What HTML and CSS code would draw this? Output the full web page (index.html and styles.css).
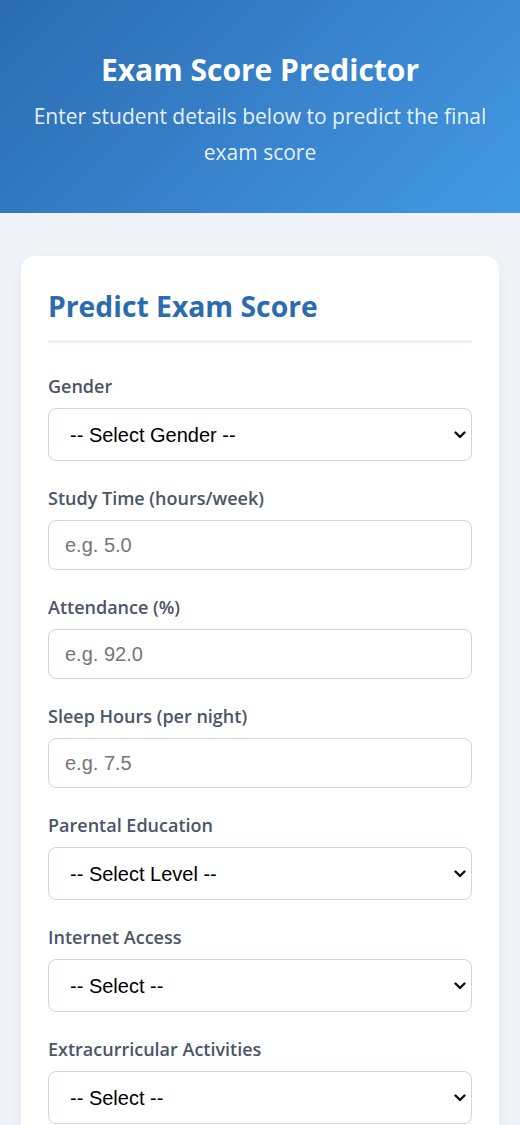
FILE: index.html
```html
<!DOCTYPE html>
<html lang="en">
<head>
<meta charset="utf-8">
<title>Exam Score Predictor</title>
<link rel="stylesheet" href="styles.css">
</head>
<body>
<header class="hero">
  <h1 class="hero-title">Exam Score Predictor</h1>
  <p class="hero-sub">Enter student details below to predict the final exam score</p>
</header>
<main class="main">
  <section class="card">
    <h2 class="card-title">Predict Exam Score</h2>
    <form class="form">
      <div class="group">
        <label class="label">Gender</label>
        <div class="select-wrap">
          <select class="control select"><option>-- Select Gender --</option></select>
          <svg class="chev" viewBox="0 0 12 8"><path d="M1.5 1.5 L6 6 L10.5 1.5" fill="none" stroke="#111" stroke-width="2.4" stroke-linecap="round" stroke-linejoin="round"/></svg>
        </div>
      </div>
      <div class="group">
        <label class="label">Study Time (hours/week)</label>
        <input class="control input" type="text" placeholder="e.g. 5.0">
      </div>
      <div class="group">
        <label class="label">Attendance (%)</label>
        <input class="control input" type="text" placeholder="e.g. 92.0">
      </div>
      <div class="group">
        <label class="label">Sleep Hours (per night)</label>
        <input class="control input" type="text" placeholder="e.g. 7.5">
      </div>
      <div class="group">
        <label class="label">Parental Education</label>
        <div class="select-wrap">
          <select class="control select"><option>-- Select Level --</option></select>
          <svg class="chev" viewBox="0 0 12 8"><path d="M1.5 1.5 L6 6 L10.5 1.5" fill="none" stroke="#111" stroke-width="2.4" stroke-linecap="round" stroke-linejoin="round"/></svg>
        </div>
      </div>
      <div class="group">
        <label class="label">Internet Access</label>
        <div class="select-wrap">
          <select class="control select"><option>-- Select --</option></select>
          <svg class="chev" viewBox="0 0 12 8"><path d="M1.5 1.5 L6 6 L10.5 1.5" fill="none" stroke="#111" stroke-width="2.4" stroke-linecap="round" stroke-linejoin="round"/></svg>
        </div>
      </div>
      <div class="group">
        <label class="label">Extracurricular Activities</label>
        <div class="select-wrap">
          <select class="control select"><option>-- Select --</option></select>
          <svg class="chev" viewBox="0 0 12 8"><path d="M1.5 1.5 L6 6 L10.5 1.5" fill="none" stroke="#111" stroke-width="2.4" stroke-linecap="round" stroke-linejoin="round"/></svg>
        </div>
      </div>
    </form>
  </section>
</main>
</body>
</html>
```
FILE: styles.css
```css
* { box-sizing: border-box; }
html, body { margin: 0; padding: 0; }
body {
  background: #f0f4f8;
  font-family: "Open Sans", "Noto Sans", sans-serif;
  color: #2d3748;
}
.hero {
  height: 213px;
  background: linear-gradient(135deg, #2b6cb0 0%, #3a86d0 60%, #4299e1 100%);
  color: #fff;
  text-align: center;
  padding: 50px 20px 0;
}
.hero-title {
  margin: 0;
  font-size: 30px;
  font-weight: 700;
  line-height: 40px;
}
.hero-sub {
  margin: 8px 0 0;
  font-size: 21px;
  line-height: 36px;
  color: rgba(255,255,255,0.9);
}
.main {
  padding: 43px 21px 40px;
}
.card {
  background: #fff;
  border-radius: 14px;
  box-shadow: 0 4px 12px rgba(0,0,0,0.05);
  padding: 30px 27px 30px;
}
.card-title {
  margin: 0;
  color: #2b6cb0;
  font-size: 28.3px;
  font-weight: 700;
  line-height: 40px;
  padding-bottom: 14px;
  border-bottom: 3px solid #ebf2fa;
  margin-bottom: 31px;
}
.group { margin-bottom: 25px; }
.label {
  display: block;
  font-size: 18px;
  font-weight: 600;
  color: #4a5568;
  line-height: 24px;
  margin-bottom: 10px;
}
.control {
  display: block;
  width: 100%;
  border: 1px solid #cfd6df;
  border-radius: 8px;
  background: #fff;
  font-family: "Liberation Sans", Arial, sans-serif;
  font-size: 20px;
  color: #000;
  outline: none;
  margin: 0;
}
.input {
  height: 50px;
  padding: 0 16px;
}
.input::placeholder { color: #767676; }
.select-wrap { position: relative; }
.select {
  height: 53px;
  padding: 0 40px 0 21px;
  appearance: none;
  -webkit-appearance: none;
}
.chev {
  position: absolute;
  right: 6px;
  top: 50%;
  width: 12px;
  height: 8px;
  margin-top: -4px;
  pointer-events: none;
}
```
